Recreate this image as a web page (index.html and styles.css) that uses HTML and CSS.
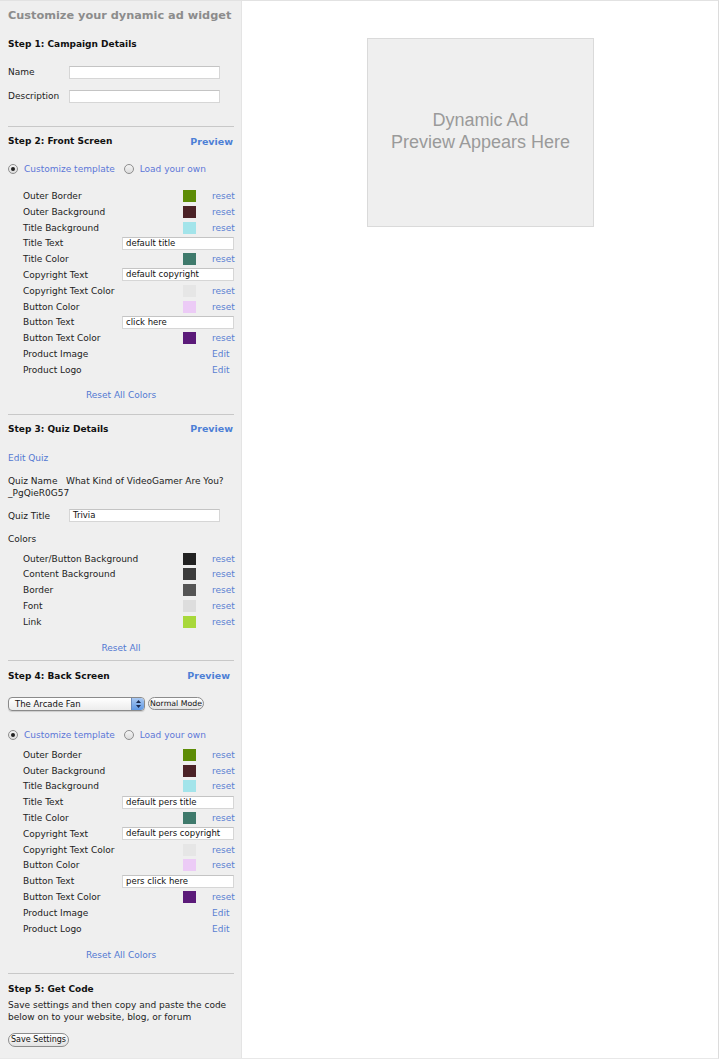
FILE: index.html
```html
<!DOCTYPE html>
<html>
<head>
<meta charset="utf-8">
<link rel="stylesheet" href="styles.css">
</head>
<body>
<div class="page">
  <div class="sidebar">
    <h1 class="title">Customize your dynamic ad widget</h1>

    <h2 class="step s1">Step 1: Campaign Details</h2>
    <div class="field f-name"><span class="flabel">Name</span><span class="input wide"></span></div>
    <div class="field f-desc"><span class="flabel">Description</span><span class="input wide"></span></div>
    <div class="sep sep1"></div>

    <h2 class="step s2"><span>Step 2: Front Screen</span><a class="preview">Preview</a></h2>
    <div class="radios r1">
      <span class="radio on"></span><a class="rlabel">Customize template</a>
      <span class="radio"></span><a class="rlabel">Load your own</a>
    </div>
    <div class="rows rows1">
      <div class="row"><span class="lbl">Outer Border</span><span class="sw" style="background:#5d8c06"></span><a class="act">reset</a></div>
      <div class="row"><span class="lbl">Outer Background</span><span class="sw" style="background:#4b2227"></span><a class="act">reset</a></div>
      <div class="row"><span class="lbl">Title Background</span><span class="sw" style="background:#a3e4ea"></span><a class="act">reset</a></div>
      <div class="row"><span class="lbl short">Title Text</span><span class="input txt">default title</span></div>
      <div class="row"><span class="lbl">Title Color</span><span class="sw" style="background:#3f7a6c"></span><a class="act">reset</a></div>
      <div class="row"><span class="lbl short">Copyright Text</span><span class="input txt">default copyright</span></div>
      <div class="row"><span class="lbl">Copyright Text Color</span><span class="sw" style="background:#e6e6e6"></span><a class="act">reset</a></div>
      <div class="row"><span class="lbl">Button Color</span><span class="sw" style="background:#eccbf6"></span><a class="act">reset</a></div>
      <div class="row"><span class="lbl short">Button Text</span><span class="input txt">click here</span></div>
      <div class="row"><span class="lbl">Button Text Color</span><span class="sw" style="background:#5b1a79"></span><a class="act">reset</a></div>
      <div class="row"><span class="lbl">Product Image</span><span class="sw none"></span><a class="act">Edit</a></div>
      <div class="row"><span class="lbl">Product Logo</span><span class="sw none"></span><a class="act">Edit</a></div>
    </div>
    <div class="center c1"><a>Reset All Colors</a></div>
    <div class="sep sep2"></div>

    <h2 class="step s3"><span>Step 3: Quiz Details</span><a class="preview">Preview</a></h2>
    <div class="plain edit"><a>Edit Quiz</a></div>
    <div class="quizname">Quiz Name&nbsp;&nbsp;&nbsp;What Kind of VideoGamer Are You?<br>_PgQieR0G57</div>
    <div class="field f-qt"><span class="flabel">Quiz Title</span><span class="input wide txt">Trivia</span></div>
    <div class="plain colors">Colors</div>
    <div class="rows rows2">
      <div class="row"><span class="lbl">Outer/Button Background</span><span class="sw" style="background:#222222"></span><a class="act">reset</a></div>
      <div class="row"><span class="lbl">Content Background</span><span class="sw" style="background:#3c3c3c"></span><a class="act">reset</a></div>
      <div class="row"><span class="lbl">Border</span><span class="sw" style="background:#555555"></span><a class="act">reset</a></div>
      <div class="row"><span class="lbl">Font</span><span class="sw" style="background:#dddddd"></span><a class="act">reset</a></div>
      <div class="row"><span class="lbl">Link</span><span class="sw" style="background:#a8d83a"></span><a class="act">reset</a></div>
    </div>
    <div class="center c2"><a>Reset All</a></div>
    <div class="sep sep3"></div>

    <h2 class="step s4"><span>Step 4: Back Screen</span><a class="preview p4">Preview</a></h2>
    <div class="selectrow">
      <div class="select"><span class="seltext">The Arcade Fan</span><span class="selbtn"><svg width="7" height="10" viewBox="0 0 7 10"><path d="M1 4 L3.5 1 L6 4 Z M1 6 L3.5 9 L6 6 Z" fill="#1a2a50"/></svg></span></div>
      <span class="btn">Normal Mode</span>
    </div>
    <div class="radios r2">
      <span class="radio on"></span><a class="rlabel">Customize template</a>
      <span class="radio"></span><a class="rlabel">Load your own</a>
    </div>
    <div class="rows rows3">
      <div class="row"><span class="lbl">Outer Border</span><span class="sw" style="background:#5d8c06"></span><a class="act">reset</a></div>
      <div class="row"><span class="lbl">Outer Background</span><span class="sw" style="background:#4b2227"></span><a class="act">reset</a></div>
      <div class="row"><span class="lbl">Title Background</span><span class="sw" style="background:#a3e4ea"></span><a class="act">reset</a></div>
      <div class="row"><span class="lbl short">Title Text</span><span class="input txt">default pers title</span></div>
      <div class="row"><span class="lbl">Title Color</span><span class="sw" style="background:#3f7a6c"></span><a class="act">reset</a></div>
      <div class="row"><span class="lbl short">Copyright Text</span><span class="input txt">default pers copyright</span></div>
      <div class="row"><span class="lbl">Copyright Text Color</span><span class="sw" style="background:#e6e6e6"></span><a class="act">reset</a></div>
      <div class="row"><span class="lbl">Button Color</span><span class="sw" style="background:#eccbf6"></span><a class="act">reset</a></div>
      <div class="row"><span class="lbl short">Button Text</span><span class="input txt">pers click here</span></div>
      <div class="row"><span class="lbl">Button Text Color</span><span class="sw" style="background:#5b1a79"></span><a class="act">reset</a></div>
      <div class="row"><span class="lbl">Product Image</span><span class="sw none"></span><a class="act">Edit</a></div>
      <div class="row"><span class="lbl">Product Logo</span><span class="sw none"></span><a class="act">Edit</a></div>
    </div>
    <div class="center c3"><a>Reset All Colors</a></div>
    <div class="sep sep4"></div>

    <h2 class="step s5">Step 5: Get Code</h2>
    <p class="desc">Save settings and then copy and paste the code below on to your website, blog, or forum</p>
    <span class="btn save">Save Settings</span>
  </div>
  <div class="main">
    <div class="preview-box">
      <div class="preview-text">Dynamic Ad<br>Preview Appears Here</div>
    </div>
  </div>
</div>
</body>
</html>
```

FILE: styles.css
```css
html, body {
  margin: 0;
  padding: 0;
  background: #ffffff;
}
.page {
  display: flex;
  width: 718px;
  height: 1057px;
  border-top: 1px solid #e2e2e2;
  border-right: 1px solid #dcdcdc;
  border-bottom: 1px solid #e8e8e8;
  font-family: "DejaVu Sans", Verdana, sans-serif;
  font-size: 9px;
  color: #222;
}
.sidebar {
  width: 242px;
  box-sizing: border-box;
  background: #efefef;
  border-right: 1px solid #e4e4e4;
  padding: 0 7px 0 8px;
}
.title {
  margin: 7px 0 0;
  font-size: 11.3px;
  line-height: 16px;
  font-weight: bold;
  color: #8c8c8c;
}
.step {
  display: flex;
  justify-content: space-between;
  align-items: center;
  box-sizing: border-box;
  margin: 0;
  height: 14px;
  padding-top: 2px;
  font-size: 9px;
  font-weight: bold;
  color: #111;
}
.s1 { margin-top: 12px; }
.preview {
  color: #4d80d6;
  font-weight: bold;
  font-size: 9.5px;
  padding-right: 1px;
}
.p4 { padding-right: 4px; }
a { color: #5379d2; text-decoration: none; }
.field {
  display: flex;
  align-items: center;
  box-sizing: border-box;
  height: 16px;
  padding-top: 2px;
}
.flabel { width: 61px; }
.f-name { margin-top: 13px; }
.f-desc { margin-top: 8px; }
.input {
  display: block;
  box-sizing: border-box;
  height: 13px;
  background: #fff;
  border: 1px solid #d6d6d6;
  border-top-color: #c4c4c4;
  font-size: 8.5px;
  line-height: 11px;
  padding-left: 3px;
  color: #111;
  white-space: nowrap;
  overflow: hidden;
}
.input.wide { width: 151px; }
.input.txt:not(.wide) { width: 114px; }
.sep {
  height: 1px;
  background: #c8c8c8;
}
.sep1 { margin-top: 23px; }
.s2 { margin-top: 6px; }
.radios {
  display: flex;
  align-items: center;
  box-sizing: border-box;
  height: 16px;
  padding-top: 2px;
  margin-top: 13px;
}
.radio {
  box-sizing: border-box;
  width: 10px;
  height: 10px;
  border-radius: 50%;
  border: 1px solid #8e8e8e;
  background: linear-gradient(#f4f4f4, #dcdcdc);
  margin-right: 6px;
  position: relative;
}
.radio.on::after {
  content: "";
  position: absolute;
  left: 2px;
  top: 2px;
  width: 4px;
  height: 4px;
  border-radius: 50%;
  background: #222;
}
.rlabel { color: #5d77d8; margin-right: 9px; }
.rows { padding-left: 15px; }
.rows1 { margin-top: 11px; }
.row {
  display: flex;
  align-items: center;
  box-sizing: border-box;
  height: 15.82px;
  padding-top: 2px;
}
.lbl { width: 160px; flex: none; }
.lbl.short { width: 99px; }
.sw {
  width: 13px;
  height: 12px;
  flex: none;
  margin-right: 16px;
}
.sw.none { background: transparent; }
.act { color: #5a7fd2; }
.center {
  text-align: center;
  height: 16px;
  line-height: 16px;
  box-sizing: border-box;
  padding-top: 1px;
}
.c1 { margin-top: 9px; }
.sep2 { margin-top: 12px; }
.s3 { margin-top: 6px; }
.plain { height: 16px; line-height: 16px; box-sizing: border-box; padding-top: 1px; }
.edit { margin-top: 14px; }
.quizname { margin-top: 10px; line-height: 12px; }
.f-qt { margin-top: 8px; }
.colors { margin-top: 7px; }
.rows2 { margin-top: 4px; }
.c2 { margin-top: 10px; }
.sep3 { margin-top: 5px; }
.s4 { margin-top: 7px; }
.selectrow {
  display: flex;
  align-items: center;
  margin-top: 15px;
  height: 14px;
}
.select {
  box-sizing: border-box;
  width: 137px;
  height: 14px;
  border: 1px solid #8a8a8a;
  border-radius: 4px;
  background: linear-gradient(#ffffff, #ececec);
  display: flex;
  align-items: center;
  justify-content: space-between;
  overflow: hidden;
  box-shadow: 0 1px 1px rgba(0,0,0,0.15);
}
.seltext { padding-left: 6px; font-size: 8.5px; color: #111; }
.selbtn {
  width: 12px;
  height: 12px;
  display: flex;
  align-items: center;
  justify-content: center;
  background: linear-gradient(#a9c8f1, #5f98e4);
  border-left: 1px solid #6b8bbd;
  border-radius: 0 3px 3px 0;
}
.btn {
  display: inline-block;
  box-sizing: border-box;
  height: 13px;
  line-height: 11px;
  border: 1px solid #8c8c8c;
  border-radius: 7px;
  padding: 0 1px;
  font-size: 7.8px;
  color: #111;
  background: linear-gradient(#ffffff, #e2e2e2);
  margin-left: 3px;
}
.r2 { margin-top: 15px; }
.rows3 { margin-top: 4px; }
.c3 { margin-top: 10px; }
.sep4 { margin-top: 11px; }
.s5 { margin-top: 7px; }
.desc {
  margin: 3px 0 0;
  line-height: 12px;
  padding-top: 1px;
}
.save {
  margin: 10px 0 0;
  height: 14px;
  line-height: 12px;
  padding: 0 2px;
  font-size: 8px;
}
.main {
  flex: 1;
  padding: 37px 0 0 125px;
}
.preview-box {
  box-sizing: border-box;
  width: 227px;
  height: 189px;
  background: #efefef;
  border: 1px solid #dadada;
  display: flex;
  align-items: center;
  justify-content: center;
  padding-bottom: 4px;
}
.preview-text {
  font-family: "Liberation Sans", Arial, sans-serif;
  font-size: 18px;
  line-height: 22px;
  color: #9a9a9a;
  text-align: center;
}
```
